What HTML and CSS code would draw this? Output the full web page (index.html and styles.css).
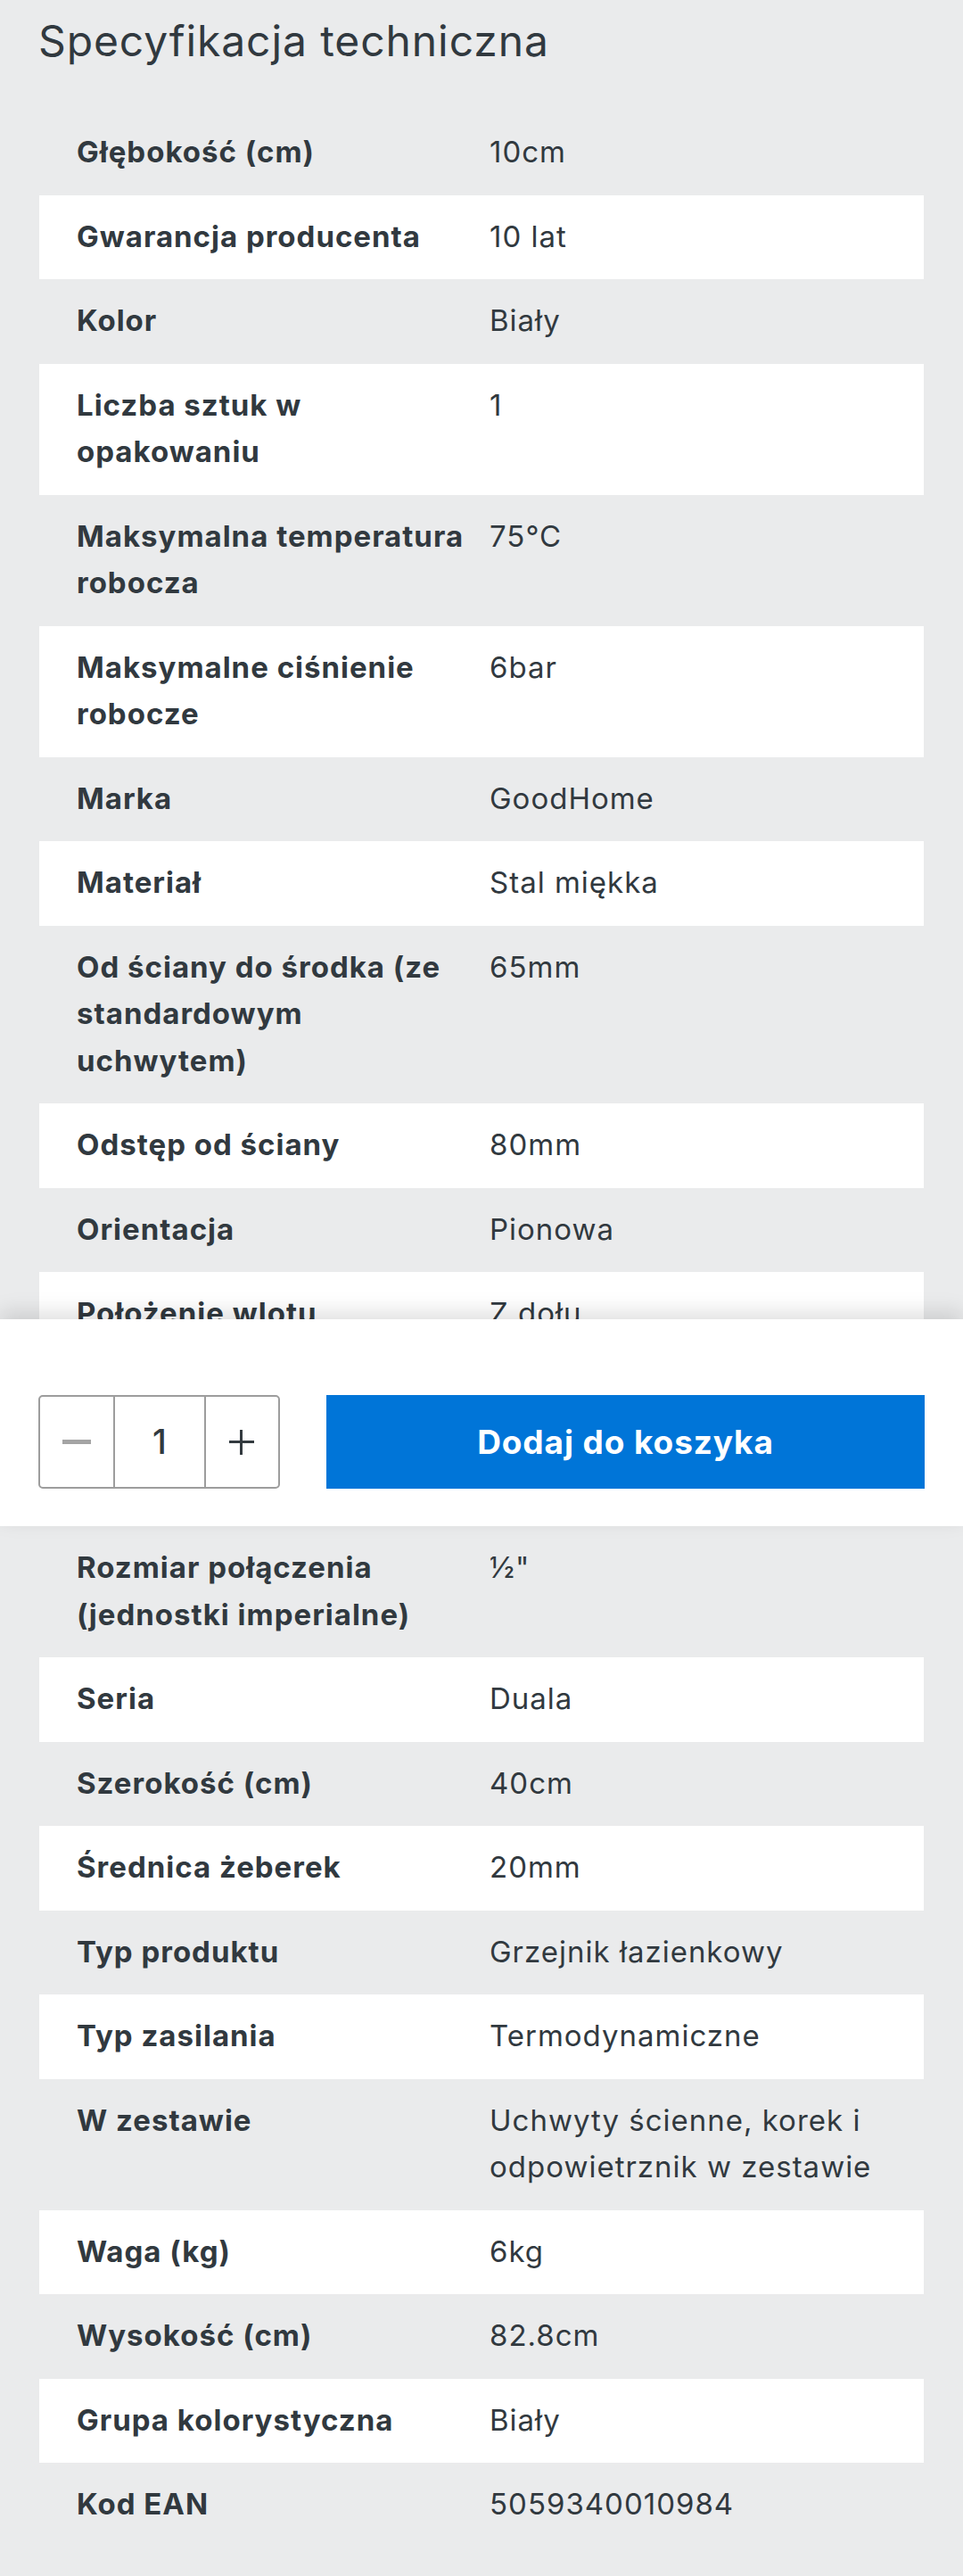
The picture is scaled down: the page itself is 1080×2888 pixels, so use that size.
FILE: index.html
```html
<!DOCTYPE html>
<html lang="pl">

<head>
    <meta charset="utf-8">
    <title>Specyfikacja techniczna</title>
    <link rel="stylesheet" href="styles.css">
</head>

<body>
    <h2 class="spec-title">Specyfikacja techniczna</h2>

    <div class="spec-list">
        <div class="spec-row"><div class="spec-name">Głębokość (cm)</div><div class="spec-value">10cm</div></div>
        <div class="spec-row"><div class="spec-name">Gwarancja producenta</div><div class="spec-value">10 lat</div></div>
        <div class="spec-row"><div class="spec-name">Kolor</div><div class="spec-value">Biały</div></div>
        <div class="spec-row"><div class="spec-name">Liczba sztuk w opakowaniu</div><div class="spec-value">1</div></div>
        <div class="spec-row"><div class="spec-name">Maksymalna temperatura robocza</div><div class="spec-value">75°C</div></div>
        <div class="spec-row"><div class="spec-name">Maksymalne ciśnienie robocze</div><div class="spec-value">6bar</div></div>
        <div class="spec-row"><div class="spec-name">Marka</div><div class="spec-value">GoodHome</div></div>
        <div class="spec-row"><div class="spec-name">Materiał</div><div class="spec-value">Stal miękka</div></div>
        <div class="spec-row"><div class="spec-name">Od ściany do środka (ze standardowym uchwytem)</div><div class="spec-value">65mm</div></div>
        <div class="spec-row"><div class="spec-name">Odstęp od ściany</div><div class="spec-value">80mm</div></div>
        <div class="spec-row"><div class="spec-name">Orientacja</div><div class="spec-value">Pionowa</div></div>
        <div class="spec-cut">
            <div class="spec-row"><div class="spec-name">Położenie wlotu</div><div class="spec-value">Z dołu</div></div>
        </div>
    </div>

    <div class="buy-bar">
        <div class="qty">
            <button class="qty-btn minus" type="button" aria-label="mniej"><span></span></button>
            <div class="qty-num">1</div>
            <button class="qty-btn plus" type="button" aria-label="więcej"><span></span></button>
        </div>
        <button class="add-cart" type="button">Dodaj do koszyka</button>
    </div>

    <div class="spec-list bottom">
        <div class="spec-row"><div class="spec-name">Rozmiar połączenia (jednostki imperialne)</div><div class="spec-value">½"</div></div>
        <div class="spec-row"><div class="spec-name">Seria</div><div class="spec-value">Duala</div></div>
        <div class="spec-row"><div class="spec-name">Szerokość (cm)</div><div class="spec-value">40cm</div></div>
        <div class="spec-row"><div class="spec-name">Średnica żeberek</div><div class="spec-value">20mm</div></div>
        <div class="spec-row"><div class="spec-name">Typ produktu</div><div class="spec-value">Grzejnik łazienkowy</div></div>
        <div class="spec-row"><div class="spec-name">Typ zasilania</div><div class="spec-value">Termodynamiczne</div></div>
        <div class="spec-row"><div class="spec-name">W zestawie</div><div class="spec-value">Uchwyty ścienne, korek i odpowietrznik w zestawie</div></div>
        <div class="spec-row"><div class="spec-name">Waga (kg)</div><div class="spec-value">6kg</div></div>
        <div class="spec-row"><div class="spec-name">Wysokość (cm)</div><div class="spec-value">82.8cm</div></div>
        <div class="spec-row"><div class="spec-name">Grupa kolorystyczna</div><div class="spec-value">Biały</div></div>
        <div class="spec-row"><div class="spec-name">Kod EAN</div><div class="spec-value">5059340010984</div></div>
    </div>
</body>

</html>
```

FILE: styles.css
```css
body {
    margin: 0;
    background: #eaebec;
    color: #31393f;
    font-family: Inter, "Noto Sans", sans-serif;
}

.spec-title {
    margin: 0;
    padding: 18px 43px 0;
    height: 106px;
    font-size: 48px;
    font-weight: 400;
    line-height: 56px;
    letter-spacing: 0.9px;
}

.spec-list {
    margin: 0 44px;
}

.spec-list.bottom {
    padding-bottom: 35px;
}

.spec-row {
    display: grid;
    grid-template-columns: 1fr 1fr;
    column-gap: 18px;
    padding: 20px 42px 22px;
    font-size: 33px;
    line-height: 52.5px;
}

/* white stripes */
.spec-list > .spec-row:nth-child(even),
.spec-cut .spec-row {
    background: #fff;
}

.spec-name {
    font-weight: 700;
    letter-spacing: 1px;
}

.spec-value {
    font-weight: 400;
    letter-spacing: 1px;
}

.spec-cut {
    height: 53px;
    overflow: hidden;
}

.buy-bar {
    position: relative;
    z-index: 1;
    display: flex;
    gap: 52px;
    height: 105px;
    padding: 85px 43px 42px;
    background: #fff;
    box-shadow: 0 -8px 22px rgba(0, 0, 0, 0.13);
}

.qty {
    display: flex;
    width: 271px;
    box-sizing: border-box;
    border: 2px solid #9d9d9d;
    border-radius: 5px;
}

.qty-btn {
    display: flex;
    align-items: center;
    justify-content: center;
    width: 82px;
    padding: 0;
    border: 0;
    background: none;
}

.qty-btn.plus {
    width: 81px;
    border-left: 2px solid #9d9d9d;
}

.qty-num {
    width: 100px;
    border-left: 2px solid #9d9d9d;
    text-align: center;
    font-size: 38px;
    font-weight: 500;
    line-height: 101px;
}

.minus span {
    width: 32px;
    height: 5px;
    background: #a4a4a4;
}

.plus span {
    position: relative;
    width: 28px;
    height: 3px;
    background: #333a3f;
}

.plus span::after {
    content: "";
    position: absolute;
    left: 12.5px;
    top: -12.5px;
    width: 3px;
    height: 28px;
    background: #333a3f;
}

.add-cart {
    flex: 1;
    border: 0;
    background: #0075d8;
    color: #fff;
    font-family: Inter, "Noto Sans", sans-serif;
    font-size: 37px;
    font-weight: 700;
    letter-spacing: 0.9px;
}
```
